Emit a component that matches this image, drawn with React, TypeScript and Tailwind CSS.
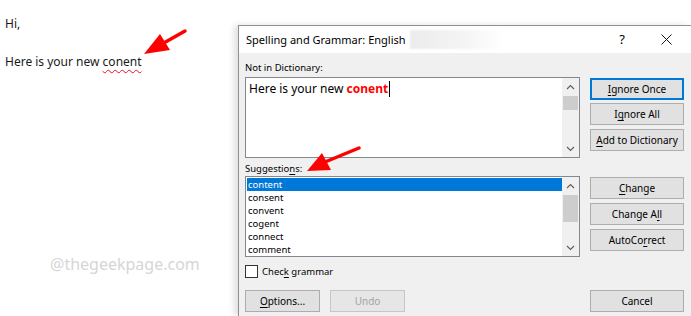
import React from "react";

const Chevron = ({ up }: { up?: boolean }) => (
  <svg width="9" height="6" viewBox="0 0 9 6">
    {up ? (
      <polyline points="1,5 4.5,1.5 8,5" fill="none" stroke="#606060" strokeWidth="1.2" />
    ) : (
      <polyline points="1,1 4.5,4.5 8,1" fill="none" stroke="#606060" strokeWidth="1.2" />
    )}
  </svg>
);

const ScrollBar = ({ thumbTop, thumbH }: { thumbTop: number; thumbH: number }) => (
  <div className="w-[17px] h-full bg-[#f0f0f0] flex flex-col shrink-0">
    <div className="h-[17px] flex items-center justify-center shrink-0">
      <Chevron up />
    </div>
    <div className="flex-1 relative">
      <div
        className="absolute left-[1px] right-[1px] bg-[#cdcdcd]"
        style={{ top: thumbTop, height: thumbH }}
      />
    </div>
    <div className="h-[17px] flex items-center justify-center shrink-0">
      <Chevron />
    </div>
  </div>
);

const Btn = ({
  children,
  className = "",
  focused,
  disabled,
}: {
  children: React.ReactNode;
  className?: string;
  focused?: boolean;
  disabled?: boolean;
}) => (
  <div
    className={
      "h-[22px] flex items-center justify-center text-[10px] leading-none whitespace-nowrap " +
      (focused
        ? "border-2 border-[#0078d7] bg-[#e1e1e1] text-black "
        : disabled
        ? "border border-[#c6c6c6] bg-[#e6e6e6] text-[#a3a3a3] "
        : "border border-[#adadad] bg-[#e1e1e1] text-black ") +
      className
    }
  >
    {children}
  </div>
);

const U = ({ children }: { children: React.ReactNode }) => (
  <span className="underline underline-offset-[2px] decoration-1">{children}</span>
);

export default function App() {
  const suggestions = ["content", "consent", "convent", "cogent", "connect", "comment"];
  return (
    <div className="relative w-[691px] h-[316px] overflow-hidden bg-white flex font-['Noto_Sans',sans-serif]">
      {/* document */}
      <div className="w-[238px] shrink-0 pl-[5px] pt-[15px] text-[12px] text-[#1a1a1a]">
        <div className="leading-[18px]">Hi,</div>
        <div className="mt-[20px] leading-[18px]">
          Here is your new{" "}
          <span className="underline decoration-wavy decoration-[#e81123] decoration-1 underline-offset-[3px]">
            conent
          </span>
        </div>
        <div className="mt-[183px] ml-[45px] text-[16px] leading-[20px] text-[#d6d6d6]">
          @thegeekpage.com
        </div>
      </div>

      {/* dialog */}
      <div className="mt-[25px] flex-1 flex flex-col border-l border-t border-[#8f8f8f] shadow-[-4px_0_6px_rgba(0,0,0,0.12)] z-10">
        {/* title bar */}
        <div className="h-[27px] bg-white flex items-center pl-[7px] shrink-0">
          <span className="text-[11px] text-black leading-none">Spelling and Grammar: English</span>
          <div className="ml-[4px] w-[95px] h-[19px] bg-gradient-to-r from-[#ececec] via-[#f3f3f3] to-[#ffffff] blur-[1px]" />
          <div className="flex-1" />
          <span className="text-[13px] text-black leading-none mr-[36px]">?</span>
          <svg width="11" height="11" viewBox="0 0 11 11" className="mr-[19px]">
            <line x1="0.5" y1="0.5" x2="10.5" y2="10.5" stroke="#111" strokeWidth="1" />
            <line x1="10.5" y1="0.5" x2="0.5" y2="10.5" stroke="#111" strokeWidth="1" />
          </svg>
        </div>

        {/* body */}
        <div className="flex-1 bg-[#f0f0f0] flex pl-[6px] pr-[7px] text-[9.5px] text-black">
          {/* left column */}
          <div className="w-[335px] flex flex-col pt-[6px]">
            <div className="h-[18px] leading-[18px]">Not in Dictionary:</div>
            <div className="h-[81px] border border-[#828790] bg-white flex">
              <div className="flex-1 pl-[3px] pt-[3px] text-[12px] leading-[16px]">
                <span>Here is your new </span>
                <span className="font-bold text-[#ff0000]">conent</span>
                <span className="inline-block w-[1px] h-[16px] bg-black align-top ml-[1px]" />
              </div>
              <ScrollBar thumbTop={1} thumbH={14} />
            </div>
            <div className="h-[18px] leading-[21px]">
              Suggestio<U>n</U>s:
            </div>
            <div className="h-[81px] border border-[#828790] bg-white flex">
              <div className="flex-1 pt-[1px] pl-[1px]">
                {suggestions.map((s, i) => (
                  <div
                    key={s}
                    className={
                      "h-[13px] leading-[13px] pl-[1px] " +
                      (i === 0 ? "bg-[#0078d7] text-white" : "text-black")
                    }
                  >
                    {s}
                  </div>
                ))}
              </div>
              <ScrollBar thumbTop={1} thumbH={27} />
            </div>
            <div className="mt-[8px] h-[13px] flex items-center">
              <div className="w-[13px] h-[13px] border border-[#333] bg-white shrink-0" />
              <span className="ml-[4px] leading-none">
                Chec<U>k</U> grammar
              </span>
            </div>
            <div className="mt-[12px] flex gap-[10px]">
              <Btn className="w-[75px]">
                <U>O</U>ptions...
              </Btn>
              <Btn className="w-[75px]" disabled>
                Undo
              </Btn>
            </div>
          </div>

          {/* right column */}
          <div className="ml-[10px] w-[94px] flex flex-col pt-[25px]">
            <Btn focused>
              <U>I</U>gnore Once
            </Btn>
            <Btn className="mt-[3px]">
              I<U>g</U>nore All
            </Btn>
            <Btn className="mt-[4px]">
              <U>A</U>dd to Dictionary
            </Btn>
            <Btn className="mt-[26px]">
              <U>C</U>hange
            </Btn>
            <Btn className="mt-[4px]">
              Change A<U>l</U>l
            </Btn>
            <Btn className="mt-[4px]">
              AutoCo<U>r</U>rect
            </Btn>
            <Btn className="mt-[39px]">Cancel</Btn>
          </div>
        </div>
      </div>

      {/* arrows */}
      <svg className="absolute inset-0 pointer-events-none z-20" width="691" height="316" viewBox="0 0 691 316">
        <line x1="185" y1="31" x2="162" y2="44" stroke="#f00" strokeWidth="3.5" strokeLinecap="round" />
        <polygon points="144,54 160,34 170,50" fill="#f00" />
        <line x1="359" y1="148" x2="325" y2="162" stroke="#f00" strokeWidth="3.5" strokeLinecap="round" />
        <polygon points="307,171 322,153 331,170" fill="#f00" />
      </svg>
    </div>
  );
}
